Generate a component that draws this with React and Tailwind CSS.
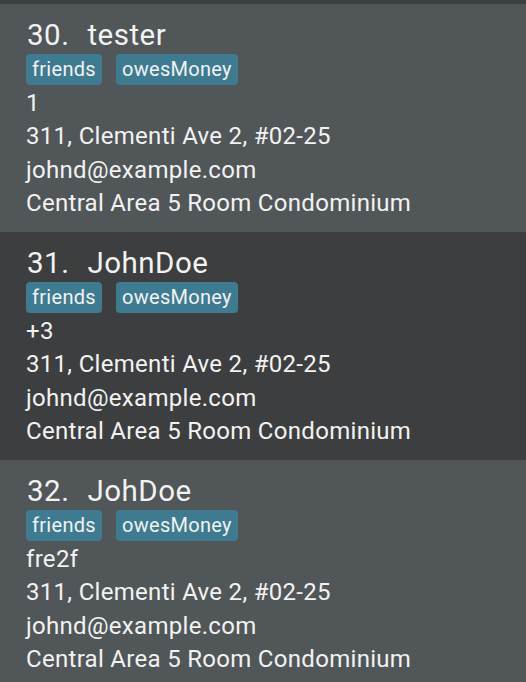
import React from "react";

const people = [
  { id: 30, name: "tester", phone: "1", bg: "bg-[#515658]" },
  { id: 31, name: "JohnDoe", phone: "+3", bg: "bg-[#3c3e3f]" },
  { id: 32, name: "JohDoe", phone: "fre2f", bg: "bg-[#515658]" },
];

function Card({ p }) {
  return (
    <div className={`${p.bg} h-[228px] shrink-0 pl-[26px] pt-[14px] pb-[12px] flex flex-col text-[#f2f2f2]`}>
      <div className="flex items-baseline text-[29.5px] leading-[34px] tracking-[0.5px] whitespace-nowrap pl-[1px]">
        <span>{p.id}.</span>
        <span className="ml-[18px]">{p.name}</span>
      </div>
      <div className="flex gap-[14px] mt-[2px] tracking-[0.3px]">
        <span className="bg-[#3e7b91] rounded-[4px] px-[6px] py-[4px] text-[20px] leading-[23px]">friends</span>
        <span className="bg-[#3e7b91] rounded-[4px] px-[6px] py-[4px] text-[20px] leading-[23px]">owesMoney</span>
      </div>
      <div className="mt-[2px] flex flex-col text-[24px] leading-[33.3px] tracking-[0.3px] whitespace-nowrap">
        <div>{p.phone}</div>
        <div>311, Clementi Ave 2, #02-25</div>
        <div>johnd@example.com</div>
        <div>Central Area 5 Room Condominium</div>
      </div>
    </div>
  );
}

export default function App() {
  return (
    <div className="w-[526px] h-[682px] overflow-hidden flex flex-col bg-[#3c3e3f]" style={{ fontFamily: "Roboto, 'Noto Sans', sans-serif" }}>
      <div className="h-[4px] shrink-0 bg-[#3c3e3f]" />
      {people.map((p) => (
        <Card key={p.id} p={p} />
      ))}
    </div>
  );
}
